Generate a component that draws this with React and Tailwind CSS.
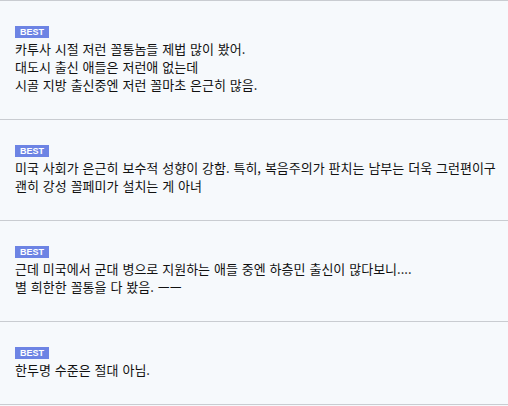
import React from 'react';

const comments = [
  ['카투사 시절 저런 꼴통놈들 제법 많이 봤어.', '대도시 출신 애들은 저런애 없는데', '시골 지방 출신중엔 저런 꼴마초 은근히 많음.'],
  ['미국 사회가 은근히 보수적 성향이 강함. 특히, 복음주의가 판치는 남부는 더욱 그런편이구', '괜히 강성 꼴페미가 설치는 게 아녀'],
  ['근데 미국에서 군대 병으로 지원하는 애들 중엔 하층민 출신이 많다보니....', '별 희한한 꼴통을 다 봤음. ㅡㅡ'],
  ['한두명 수준은 절대 아님.'],
];

const App = () => {
  return (
    <div className="w-[508px] h-[406px] bg-[#f6f9fc] overflow-hidden">
      {comments.map((lines, i) => (
        <div
          key={i}
          className={`border-t border-[#c9ccd1] px-[15px] pt-[25px] pb-[25px] ${i === comments.length - 1 ? 'border-b' : ''}`}
        >
          <div className="flex">
            <span className="h-[12px] px-[5px] bg-[#6d84e4] text-white text-[9px] leading-[12px] font-bold font-['Liberation_Sans',sans-serif]">
              BEST
            </span>
          </div>
          <div className="mt-[2px] text-[13px] leading-[18px] text-[#111] font-['Noto_Sans_CJK_KR',sans-serif] [word-spacing:1px] whitespace-nowrap">
            {lines.map((line, j) => (
              <div key={j}>{line}</div>
            ))}
          </div>
        </div>
      ))}
    </div>
  );
};

export default App;
